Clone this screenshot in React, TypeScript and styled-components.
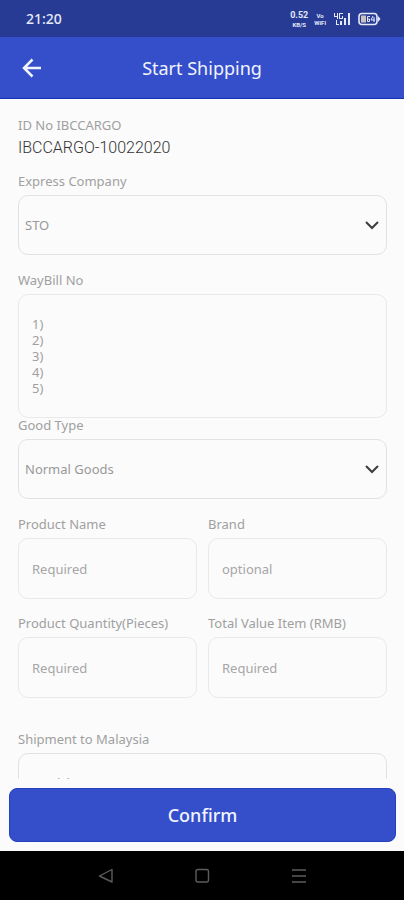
import React, { useId } from "react";
import styled, { createGlobalStyle } from "styled-components";

const GlobalStyle = createGlobalStyle`
  * { box-sizing: border-box; }
  body { margin: 0; background: #fbfbfb; }
  body, button, input, select, textarea { font-family: "Noto Sans", "Open Sans", sans-serif; }
`;

const Screen = styled.div`
  display: flex;
  flex-direction: column;
  height: 100vh;
  background: #fbfbfb;
`;

const StatusBar = styled.div`
  display: flex;
  flex: none;
  align-items: center;
  justify-content: space-between;
  height: 37px;
  padding: 0 23px 0 26px;
  background: #283b94;
  color: #e4e9fb;
`;

const Clock = styled.time`
  font-size: 14px;
  font-weight: 500;
`;

const StatusIcons = styled.div`
  display: flex;
  align-items: center;
  gap: 6px;
`;

const StackedText = styled.span`
  display: flex;
  flex-direction: column;
  align-items: center;
  font: 700 6px/7px Roboto, sans-serif;
`;

const Speed = styled.span`
  font-size: 9px;
  line-height: 11px;
`;

const Header = styled.header`
  display: grid;
  flex: none;
  grid-template-columns: 24px 1fr 24px;
  align-items: center;
  height: 62px;
  padding: 0 20px;
  border-bottom: 1px solid #1533b4;
  background: #354fcb;
  color: #f1f4ff;
`;

const Title = styled.h1`
  margin: 0;
  font-size: 18px;
  font-weight: 400;
  line-height: 24px;
  text-align: center;
`;

const IconButton = styled.button`
  display: flex;
  padding: 0;
  border: 0;
  background: none;
  color: inherit;
`;

const Form = styled.form`
  display: flex;
  flex: 1;
  flex-direction: column;
  min-height: 0;
`;

const Fields = styled.div`
  flex: 1;
  min-height: 0;
  padding: 19px 17px 0 18px;
  overflow: hidden;
`;

const FieldBox = styled.div<{ $after?: number }>`
  display: flex;
  flex-direction: column;
  gap: 7px;
  min-width: 0;
  margin-bottom: ${(p) => p.$after ?? 0}px;
`;

const Label = styled.label`
  color: #a0a0a0;
  font-size: 13px;
  line-height: 14px;
  white-space: nowrap;
`;

const IdValue = styled.output`
  color: #333;
  font: 300 16px/18px Roboto, sans-serif;
`;

const Columns = styled.div`
  display: grid;
  grid-template-columns: 1fr 1fr;
  gap: 17px 11px;
  margin-bottom: 34px;
`;

const TextInput = styled.input`
  width: 100%;
  height: 61px;
  padding: 0 13px;
  border: 1px solid #e9e9e9;
  border-radius: 10px;
  outline: none;
  background: transparent;
  color: #555;
  font-size: 13px;

  &::placeholder { color: #a6a6a6; }
`;

const TextArea = styled.textarea`
  display: block;
  width: 100%;
  padding: 21px 13px;
  border: 1px solid #e9e9e9;
  border-radius: 10px;
  outline: none;
  background: transparent;
  color: #555;
  font-size: 13px;
  line-height: 16px;
  resize: none;

  &::placeholder { color: #a0a0a0; }
`;

const SelectWrap = styled.div`
  display: grid;
  align-items: center;

  > * { grid-area: 1 / 1; }

  svg {
    justify-self: end;
    margin-right: 7px;
    pointer-events: none;
  }
`;

const Select = styled.select<{ $inset?: number }>`
  width: 100%;
  height: 60px;
  padding: 0 30px 0 ${(p) => p.$inset ?? 6}px;
  border: 1px solid #e2e2e2;
  border-radius: 10px;
  outline: none;
  appearance: none;
  background: transparent;
  color: #999;
  font-size: 13px;
`;

const Footer = styled.div`
  flex: none;
  padding: 9px 8px 9px 9px;
`;

const ConfirmButton = styled.button`
  width: 100%;
  height: 54px;
  border: 1px solid #2340c0;
  border-radius: 8px;
  background: #354fcb;
  color: #f1f4ff;
  font-size: 18px;
  font-weight: 500;
`;

const NavBar = styled.nav`
  display: flex;
  flex: none;
  align-items: center;
  justify-content: center;
  gap: 77px;
  height: 49px;
  background: #000;
  color: #5c5c5c;
`;

const Chevron = () => (
  <svg width="16" height="12" viewBox="0 0 16 12" fill="none" stroke="#3c3c3c" strokeWidth="2" aria-hidden="true">
    <path d="M2 3l6 6 6-6" />
  </svg>
);

function SelectField({ label, options, after, chevron = true }: { label: string; options: string[]; after?: number; chevron?: boolean }) {
  const id = useId();
  return (
    <FieldBox $after={after}>
      <Label htmlFor={id}>{label}</Label>
      <SelectWrap>
        <Select id={id} $inset={chevron ? 6 : 9}>
          {options.map((o) => <option key={o}>{o}</option>)}
        </Select>
        {chevron && <Chevron />}
      </SelectWrap>
    </FieldBox>
  );
}

function InputField({ label, placeholder }: { label: string; placeholder: string }) {
  const id = useId();
  return (
    <FieldBox>
      <Label htmlFor={id}>{label}</Label>
      <TextInput id={id} placeholder={placeholder} />
    </FieldBox>
  );
}

export default function App() {
  return (
    <Screen>
      <GlobalStyle />
      <StatusBar>
        <Clock>21:20</Clock>
        <StatusIcons>
          <StackedText><Speed>0.52</Speed><span>KB/S</span></StackedText>
          <StackedText><span>Vo</span><span>WiFi</span></StackedText>
          <svg width="20" height="14" viewBox="0 0 20 14" fill="currentColor" aria-hidden="true">
            <path d="M2 1h1v3h2V1h1v6H5V5H2zM7 1h4v1H8v4h2V4h1v3H7zM4 8h1v4h2v1H4zM8 9h2v4H8zM12 6h2v7h-2zM16 1h2v12h-2z" />
          </svg>
          <svg width="23" height="14" viewBox="0 0 23 14" fill="none" aria-hidden="true">
            <rect x="1" y="1.5" width="18" height="11" rx="3" stroke="#e4e9fb" strokeWidth="1.6" />
            <path d="M20 4l2.500 3-2.500 3z" fill="#e4e9fb" />
            <path d="M3 3.500h5v7H3z" fill="#c9c3c0" />
            <path d="M12 4.500H9.500v5h2V7h-2M15 4l-2 4h4M16 5v5" stroke="#e4e9fb" />
          </svg>
        </StatusIcons>
      </StatusBar>
      <Header>
        <IconButton type="button" aria-label="Back">
          <svg width="24" height="24" viewBox="0 0 24 24" fill="none" stroke="currentColor" strokeWidth="2.5">
            <path d="M21 12H4M12.500 3.500L4 12l8.500 8.500" />
          </svg>
        </IconButton>
        <Title>Start Shipping</Title>
      </Header>
      <Form onSubmit={(e) => e.preventDefault()}>
        <Fields>
          <FieldBox $after={17}>
            <Label htmlFor="cargo-id">ID No IBCCARGO</Label>
            <IdValue id="cargo-id">IBCCARGO-10022020</IdValue>
          </FieldBox>
          <SelectField label="Express Company" options={["STO"]} after={18} />
          <FieldBox>
            <Label htmlFor="waybill">WayBill No</Label>
            <TextArea id="waybill" rows={5} placeholder={"1)\n2)\n3)\n4)\n5)"} />
          </FieldBox>
          <SelectField label="Good Type" options={["Normal Goods"]} after={18} />
          <Columns>
            <InputField label="Product Name" placeholder="Required" />
            <InputField label="Brand" placeholder="optional" />
            <InputField label="Product Quantity(Pieces)" placeholder="Required" />
            <InputField label="Total Value Item (RMB)" placeholder="Required" />
          </Columns>
          <SelectField label="Shipment to Malaysia" options={["No Pickup"]} chevron={false} />
        </Fields>
        <Footer>
          <ConfirmButton type="submit">Confirm</ConfirmButton>
        </Footer>
      </Form>
      <NavBar>
        <IconButton type="button" aria-label="System back">
          <svg width="20" height="20" viewBox="0 0 20 20" fill="none" stroke="currentColor" strokeWidth="1.4" strokeLinejoin="round">
            <path d="M17 3.500v12.500L4.500 10z" />
          </svg>
        </IconButton>
        <IconButton type="button" aria-label="Home">
          <svg width="20" height="20" viewBox="0 0 20 20" fill="none" stroke="currentColor" strokeWidth="1.400">
            <rect x="4" y="3.500" width="12.500" height="12.500" rx="2" />
          </svg>
        </IconButton>
        <IconButton type="button" aria-label="Recent apps">
          <svg width="20" height="20" viewBox="0 0 20 20" fill="none" stroke="currentColor" strokeWidth="1.400">
            <path d="M3 4h14M3 10h14M3 16h14" />
          </svg>
        </IconButton>
      </NavBar>
    </Screen>
  );
}
